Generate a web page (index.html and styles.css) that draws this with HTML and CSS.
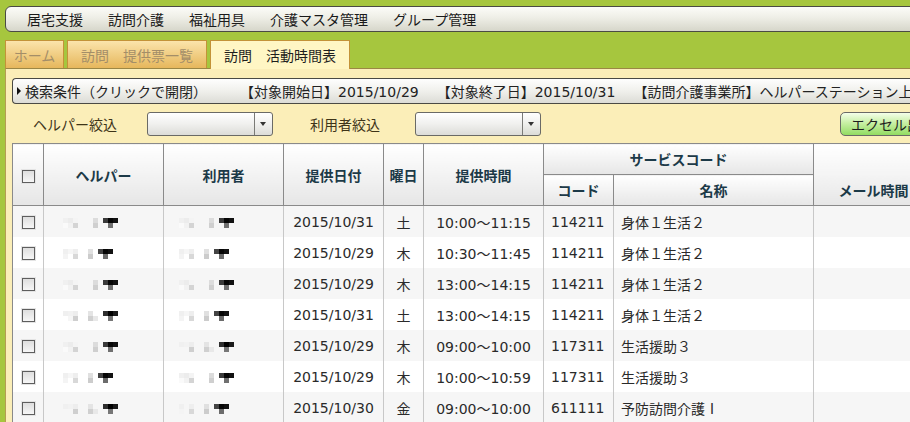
FILE: index.html
```html
<!DOCTYPE html>
<html lang="ja">
<head>
    <meta charset="UTF-8">
    <title>訪問 活動時間表</title>
    <link rel="stylesheet" href="styles.css">
</head>
<body>

    <!-- Menu bar -->
    <div class="menubar">
        <span>居宅支援</span>
        <span>訪問介護</span>
        <span>福祉用具</span>
        <span>介護マスタ管理</span>
        <span>グループ管理</span>
    </div>

    <!-- Tabs -->
    <div class="tabs">
        <div class="tab tab-home">ホーム</div>
        <div class="tab tab-wide">訪問　提供票一覧</div>
        <div class="tab tab-wide active">訪問　活動時間表</div>
    </div>

    <div class="panel">
        <!-- Search conditions -->
        <div class="search">
            <span class="arrow"></span>
            <span class="search-title">検索条件（クリックで開閉）</span>
            <span class="cond cond-first">【対象開始日】2015/10/29</span>
            <span class="cond">【対象終了日】2015/10/31</span>
            <span class="cond">【訪問介護事業所】ヘルパーステーション上野</span>
        </div>

        <!-- Filters -->
        <div class="filters">
            <span class="filter-label label-helper">ヘルパー絞込</span>
            <div class="select"><span class="select-arrow"></span></div>
            <span class="filter-label label-user">利用者絞込</span>
            <div class="select"><span class="select-arrow"></span></div>
            <div class="excel-btn">エクセル出力</div>
        </div>

        <!-- Activity table -->
        <table class="grid">
            <colgroup>
                <col class="c-check">
                <col class="c-name">
                <col class="c-name">
                <col class="c-date">
                <col class="c-day">
                <col class="c-time">
                <col class="c-code">
                <col class="c-label">
                <col class="c-mail">
                <col class="c-rest">
            </colgroup>
            <thead>
                <tr>
                    <th rowspan="2"><span class="check"></span></th>
                    <th rowspan="2">ヘルパー</th>
                    <th rowspan="2">利用者</th>
                    <th rowspan="2">提供日付</th>
                    <th rowspan="2">曜日</th>
                    <th rowspan="2">提供時間</th>
                    <th colspan="2">サービスコード</th>
                    <th class="open-bottom"></th>
                    <th class="open-bottom"></th>
                </tr>
                <tr>
                    <th>コード</th>
                    <th>名称</th>
                    <th class="open-top">メール時間</th>
                    <th class="open-top"></th>
                </tr>
            </thead>
            <tbody id="rows"></tbody>
        </table>
    </div>

    <script>
        // rows of the activity table
        const rows = [
            { date: "2015/10/31", day: "土", time: "10:00～11:15", code: "114211", name: "身体１生活２", h: 0, u: 0 },
            { date: "2015/10/29", day: "木", time: "10:30～11:45", code: "114211", name: "身体１生活２", h: 1, u: 1 },
            { date: "2015/10/29", day: "木", time: "13:00～14:15", code: "114211", name: "身体１生活２", h: 0, u: 0 },
            { date: "2015/10/31", day: "土", time: "13:00～14:15", code: "114211", name: "身体１生活２", h: 2, u: 1 },
            { date: "2015/10/29", day: "木", time: "09:00～10:00", code: "117311", name: "生活援助３", h: 0, u: 2 },
            { date: "2015/10/29", day: "木", time: "10:00～10:59", code: "117311", name: "生活援助３", h: 1, u: 0 },
            { date: "2015/10/30", day: "金", time: "09:00～10:00", code: "611111", name: "予防訪問介護Ⅰ", h: 2, u: 1 }
        ];

        const tbody = document.getElementById("rows");

        rows.forEach(function (r) {
            const tr = document.createElement("tr");
            tr.innerHTML =
                '<td class="t-check"><span class="check"></span></td>' +
                '<td class="t-name"><span class="mosaic m' + r.h + '"></span></td>' +
                '<td class="t-name t-user"><span class="mosaic m' + r.u + '"></span></td>' +
                '<td class="t-center">' + r.date + '</td>' +
                '<td class="t-center">' + r.day + '</td>' +
                '<td class="t-center">' + r.time + '</td>' +
                '<td>' + r.code + '</td>' +
                '<td class="t-label">' + r.name + '</td>' +
                '<td></td>' +
                '<td></td>';
            tbody.appendChild(tr);
        });
    </script>

</body>
</html>
```

FILE: styles.css
```css
html, body {
    overflow: hidden;
}

body {
    margin: 0;
    background-color: #a6c63e;
    font-family: "DejaVu Sans", "Noto Sans CJK JP", sans-serif;
    font-size: 14px;
    color: #222;
}

/* Menu bar */
.menubar {
    box-sizing: border-box;
    width: 1100px;
    height: 26px;
    margin: 6px 0 0 5px;
    padding-left: 21px;
    display: flex;
    align-items: center;
    gap: 25px;
    border: 1px solid #4a4a44;
    border-radius: 6px 0 0 6px;
    background: linear-gradient(#fcfcf8, #eeeee6 45%, #d6d6ca);
    font-family: "Noto Sans CJK JP", sans-serif;
    color: #1a1a1a;
}

/* Tabs */
.tabs {
    display: flex;
    gap: 3px;
    margin: 8px 0 0 5px;
    height: 28px;
}

.tab {
    box-sizing: border-box;
    height: 28px;
    display: flex;
    align-items: center;
    justify-content: center;
    border: 1px solid #c39338;
    border-bottom: none;
    background: linear-gradient(#fbe4ab, #e6b75c);
    color: #a48e68;
    font-family: "Noto Sans CJK JP", sans-serif;
}

.tab-home {
    width: 59px;
}

.tab-wide {
    width: 140px;
}

.tab.active {
    position: relative;
    height: 29px;
    margin-bottom: -1px;
    background: #fff6c4;
    color: #1e1e1e;
    z-index: 1;
}

/* Panel */
.panel {
    box-sizing: border-box;
    width: 1100px;
    margin-left: 5px;
    padding: 9px 0 0 6px;
    height: 400px;
    border-top: 1px solid #9b8746;
    border-left: 1px solid #b59c52;
    background-color: #fbeeb8;
}

/* Search bar */
.search {
    box-sizing: border-box;
    height: 26px;
    display: flex;
    align-items: center;
    padding-left: 4px;
    border: 1px solid #4a4a44;
    border-right: none;
    border-radius: 4px 0 0 4px;
    background: linear-gradient(#fefefe, #f0f0ec 50%, #dcdcd6);
    white-space: nowrap;
}

.arrow {
    width: 0;
    height: 0;
    border-top: 4px solid transparent;
    border-bottom: 4px solid transparent;
    border-left: 4px solid #111;
    margin-right: 4px;
}

.cond-first {
    margin-left: 33px;
}

.cond {
    margin-right: 18px;
}

/* Filters */
.filters {
    display: flex;
    align-items: center;
    height: 24px;
    margin-top: 8px;
    white-space: nowrap;
}

.filter-label {
    color: #3e3418;
    font-family: "Noto Sans CJK JP", sans-serif;
}

.label-helper {
    margin: 0 30px 0 21px;
}

.label-user {
    margin: 0 35px 0 37px;
}

.select {
    box-sizing: border-box;
    width: 126px;
    height: 24px;
    display: flex;
    justify-content: flex-end;
    border: 1px solid #6a6a66;
    border-radius: 3px;
    background: linear-gradient(#ffffff, #f0f0ee 50%, #dcdcd8);
}

.select-arrow {
    width: 17px;
    border-left: 1px solid #7a7a76;
    position: relative;
}

.select-arrow::after {
    content: "";
    position: absolute;
    left: 5px;
    top: 9px;
    border-left: 3.5px solid transparent;
    border-right: 3.5px solid transparent;
    border-top: 4px solid #333;
}

.excel-btn {
    box-sizing: border-box;
    margin-left: 299px;
    height: 24px;
    width: 110px;
    padding-left: 10px;
    display: flex;
    align-items: center;
    border: 1px solid #6a6a66;
    border-radius: 5px;
    background: linear-gradient(#f4ffe9, #c8f0a4 45%, #92dc62);
    color: #1e1e1e;
    font-family: "Noto Sans CJK JP", sans-serif;
}

/* Table */
.grid {
    margin-top: 7px;
    border-collapse: collapse;
    table-layout: fixed;
    width: 1080px;
    background-color: #fff;
}

.c-check { width: 31px; }
.c-name { width: 120px; }
.c-date { width: 100px; }
.c-day { width: 40px; }
.c-time { width: 120px; }
.c-code { width: 70px; }
.c-label { width: 200px; }
.c-mail { width: 120px; }
.c-rest { width: 159px; }

.grid th {
    height: 30px;
    padding: 0;
    border: 1px solid #8a8a8a;
    background: linear-gradient(#ffffff, #e6e6e6);
    color: #1c3a48;
    font-family: "Noto Sans CJK JP", sans-serif;
    font-weight: bold;
    text-align: center;
}

.grid th.open-bottom {
    border-bottom: hidden;
    background: linear-gradient(#ffffff, #f4f4f4);
}

.grid th.open-top {
    background: linear-gradient(#f4f4f4, #e6e6e6);
}

.grid td {
    height: 31px;
    padding: 0 0 0 7px;
    border-left: 1px solid #c8c8c8;
    border-right: 1px solid #c8c8c8;
    white-space: nowrap;
    overflow: hidden;
    color: #2a2a2a;
}

.grid td.t-center {
    padding: 0;
    text-align: center;
}

.grid td.t-label {
    font-family: "Noto Sans CJK JP", sans-serif;
}

.grid td.t-check {
    padding: 0;
    text-align: center;
    border-left-color: #8a8a8a;
}

.grid tbody tr:nth-child(odd) {
    background-color: #f6f6f6;
}

.grid td.t-name {
    padding-left: 19px;
}

.grid td.t-user {
    padding-left: 15px;
}

/* Checkbox */
.check {
    display: inline-block;
    box-sizing: border-box;
    width: 13px;
    height: 13px;
    vertical-align: middle;
    border: 1px solid #5e5e5e;
    background: linear-gradient(#dedede, #f6f6f6);
    box-shadow: 0 0 0 1px #e4e4e4;
}

/* Masked names (mosaic blocks) */
.mosaic {
    display: inline-block;
    position: relative;
    width: 60px;
    height: 10px;
    vertical-align: middle;
}

.mosaic::before {
    content: "";
    position: absolute;
    left: 0;
    top: 0;
    width: 5px;
    height: 5px;
    background: #f0f0f0;
}

.m0::before {
    box-shadow:
        5px 0 #ececec, 10px 0 #f4f4f4, 10px 5px #d4d4d4,
        0 5px #fafafa, 5px 5px #f2f2f2,
        30px 0 #dcdcdc, 30px 5px #cfcfcf,
        40px 0 #3a3a3a, 45px 0 #050505, 50px 0 #111,
        45px 5px #707070;
}

.m1::before {
    box-shadow:
        5px 0 #f6f6f6, 10px 0 #eeeeee, 10px 5px #d8d8d8,
        0 5px #f4f4f4,
        25px 0 #e0e0e0, 25px 5px #cccccc,
        35px 0 #444, 40px 0 #060606, 45px 0 #121212,
        40px 5px #6c6c6c;
}

.m2::before {
    box-shadow:
        5px 0 #f2f2f2, 10px 0 #ededed, 10px 5px #cfcfcf,
        5px 5px #f6f6f6,
        25px 0 #e4e4e4, 25px 5px #d0d0d0, 30px 5px #e8e8e8,
        40px 0 #2e2e2e, 45px 0 #000, 50px 0 #1a1a1a,
        45px 5px #777;
}
```
